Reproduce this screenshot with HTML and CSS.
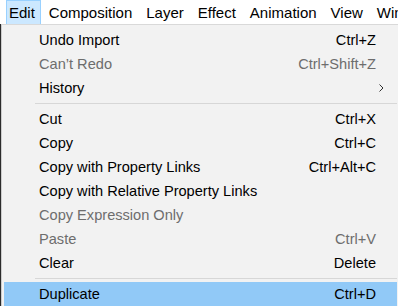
FILE: index.html
```html
<!DOCTYPE html>
<html lang="en">
<head>
    <meta charset="UTF-8">
    <title>Edit menu</title>
    <link rel="stylesheet" href="styles.css">
</head>
<body>
    <div class="menubar">
        <span class="bar-item active">Edit</span>
        <span class="bar-item">Composition</span>
        <span class="bar-item">Layer</span>
        <span class="bar-item">Effect</span>
        <span class="bar-item">Animation</span>
        <span class="bar-item">View</span>
        <span class="bar-item">Window</span>
    </div>

    <div class="popup">
        <div class="row"><span class="label">Undo Import</span><span class="key">Ctrl+Z</span></div>
        <div class="row disabled"><span class="label">Can’t Redo</span><span class="key">Ctrl+Shift+Z</span></div>
        <div class="row"><span class="label">History</span>
            <span class="arrow"><svg width="5" height="8" viewBox="0 0 5 8"><path d="M0.5 0.5 L4 4 L0.5 7.5" fill="none" stroke="#333" stroke-width="1"/></svg></span>
        </div>
        <div class="sep"></div>
        <div class="row"><span class="label">Cut</span><span class="key">Ctrl+X</span></div>
        <div class="row"><span class="label">Copy</span><span class="key">Ctrl+C</span></div>
        <div class="row"><span class="label">Copy with Property Links</span><span class="key">Ctrl+Alt+C</span></div>
        <div class="row"><span class="label">Copy with Relative Property Links</span></div>
        <div class="row disabled"><span class="label">Copy Expression Only</span></div>
        <div class="row disabled"><span class="label">Paste</span><span class="key">Ctrl+V</span></div>
        <div class="row"><span class="label">Clear</span><span class="key">Delete</span></div>
        <div class="sep"></div>
        <div class="row hover"><span class="label">Duplicate</span><span class="key">Ctrl+D</span></div>
    </div>
</body>
</html>
```

FILE: styles.css
```css
body {
    margin: 0;
    width: 398px;
    height: 306px;
    overflow: hidden;
    background-color: #2b2b2b;
    font-family: 'Liberation Sans', Arial, sans-serif;
    font-size: 14.6px;
    color: #000;
}
.menubar {
    display: flex;
    height: 24px;
    background-color: #fff;
    padding-left: 6px;
    font-size: 15px;
    white-space: nowrap;
    overflow: hidden;
}
.bar-item {
    display: flex;
    align-items: center;
    padding: 0 5px 0 2px;
    margin-right: 5px;
    border: 1px solid transparent;
    border-bottom: 0;
}
.bar-item.active {
    background-color: #cce8ff;
    border-color: #99d1ff;
}
.popup {
    margin-left: 1px;
    background-color: #f2f2f2;
    border-top: 1px solid #d9d9d9;
    border-left: 1px solid #cccccc;
    padding: 3px 0 0 2px;
}
.row {
    display: flex;
    align-items: center;
    height: 24px;
    margin-right: 1px;
    white-space: nowrap;
}
.label {
    flex: 1;
    padding-left: 35px;
}
.key {
    padding-right: 21px;
}
.arrow {
    padding-right: 13px;
    display: flex;
}
.disabled {
    color: #6d6d6d;
}
.hover {
    background-color: #91c9f7;
}
.sep {
    height: 1px;
    margin: 3px 1px 3px 31px;
    background-color: #d7d7d7;
}
```
